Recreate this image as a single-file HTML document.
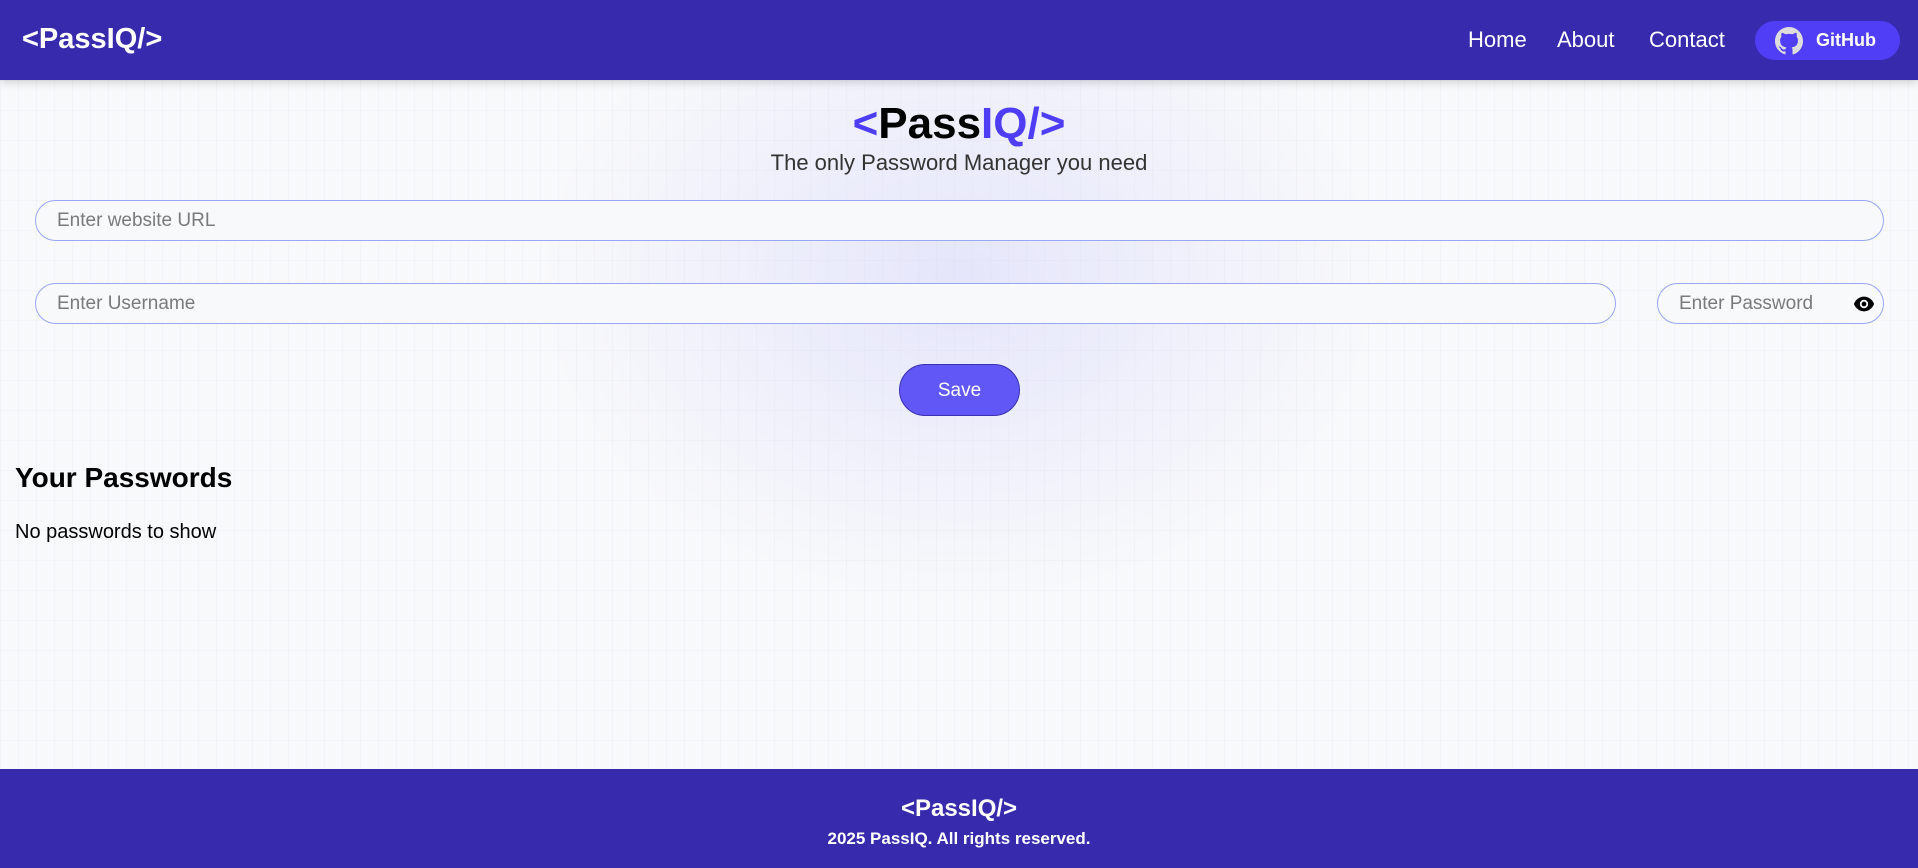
<!DOCTYPE html>
<html><head><meta charset="utf-8"><style>
*{box-sizing:border-box;margin:0;padding:0}
body{width:1918px;height:868px;overflow:hidden;font-family:"Liberation Sans",sans-serif;background:#f8f9fb;position:relative}
.bg{position:absolute;left:0;top:80px;width:1918px;height:689px;
background:radial-gradient(ellipse 420px 320px at 959px 200px,rgba(200,200,250,0.4),rgba(248,249,251,0) 100%),
linear-gradient(to right,rgba(200,205,220,0.12) 1px,transparent 1px),
linear-gradient(to bottom,rgba(200,205,220,0.12) 1px,transparent 1px);
background-size:auto,18px 18px,18px 30px}
header{position:absolute;left:0;top:0;width:1918px;height:80px;background:#372aad;box-shadow:0 3px 8px rgba(0,0,0,0.15);z-index:2}
.logo{position:absolute;left:22px;top:23px;color:#fff;font-weight:bold;font-size:29px}
.nav{position:absolute;top:27px;color:#fff;font-size:22px}
.gh{position:absolute;left:1755px;top:21px;width:145px;height:39px;border-radius:20px;background:#4f3ef5;color:#fff;font-weight:bold;font-size:18px}
.gh svg{position:absolute;left:20px;top:6px}
.gh span{position:absolute;left:61px;top:9px}
h1{position:absolute;left:0;width:1918px;top:99px;text-align:center;font-size:44px;font-weight:bold;color:#000}
.p{color:#4f3df5}
.sub{position:absolute;left:0;width:1918px;top:150px;text-align:center;font-size:22px;color:#333}
.inp{position:absolute;border:1px solid #99a6f5;border-radius:22px;background:#f8f9fb;color:#7a7a7a;font-size:19px;padding-left:21px;line-height:39px}
.save{position:absolute;left:899px;top:364px;width:121px;height:52px;border-radius:26px;background:#6157f6;border:1px solid #3a2fb0;color:#fff;font-size:19px;text-align:center;line-height:52px}
h2{position:absolute;left:15px;top:462px;font-size:28px;font-weight:bold;color:#000}
.none{position:absolute;left:15px;top:521px;font-size:20px;color:#000}
footer{position:absolute;left:0;top:769px;width:1918px;height:99px;background:#372aad;color:#fff;text-align:center}
.fl{position:absolute;width:100%;top:26px;font-size:24px;font-weight:bold}
.fc{position:absolute;width:100%;top:60px;font-size:17px;font-weight:bold}
</style></head><body>
<div class="bg"></div>
<header>
<div class="logo">&lt;PassIQ/&gt;</div>
<div class="nav" style="left:1468px">Home</div>
<div class="nav" style="left:1557px">About</div>
<div class="nav" style="left:1649px">Contact</div>
<div class="gh"><svg width="28" height="28" viewBox="0 0 16 16"><path fill="#ddd" d="M8 0C3.58 0 0 3.580 0 8c0 3.54 2.29 6.53 5.470 7.590.4.07.55-.17.55-.38v-1.33c-2.23.48-2.7-1.07-2.7-1.07-.36-.92-.89-1.17-.89-1.17-.73-.5.06-.49.06-.49.8.06 1.23.83 1.23.83.72 1.22 1.87.87 2.33.66.07-.52.28-.87.51-1.07-1.78-.2-3.64-.89-3.64-3.95 0-.87.31-1.59.82-2.15-.08-.2-.36-1.02.08-2.12 0 0 .67-.21 2.2.82a7.6 7.6 0 0 1 4 0c1.53-1.04 2.2-.82 2.2-.82.44 1.1.16 1.92.08 2.12.51.56.82 1.27.82 2.15 0 3.07-1.87 3.750-3.65 3.95.29.25.54.73.54 1.48v2.2c0 .21.15.46.55.38A8.01 8.01 0 0 0 16 8c0-4.42-3.58-8-8-8z"/></svg><span>GitHub</span></div>
</header>
<h1><span class="p">&lt;</span>Pass<span class="p">IQ/&gt;</span></h1>
<div class="sub">The only Password Manager you need</div>
<div class="inp" style="left:35px;top:200px;width:1849px;height:41px">Enter website URL</div>
<div class="inp" style="left:35px;top:283px;width:1581px;height:41px">Enter Username</div>
<div class="inp" style="left:1657px;top:283px;width:227px;height:41px">Enter Password
<svg style="position:absolute;right:8px;top:11px" width="22" height="18" viewBox="0 0 24 18"><path d="M12 1C6.5 1 2.5 5 1 9c1.5 4 5.5 8 11 8s9.5-4 11-8c-1.5-4-5.5-8-11-8z" fill="#000"/><circle cx="12" cy="9" r="4.6" fill="#f8f9fb"/><circle cx="12" cy="9" r="2.6" fill="#000"/></svg></div>
<div class="save">Save</div>
<h2>Your Passwords</h2>
<div class="none">No passwords to show</div>
<footer><div class="fl">&lt;PassIQ/&gt;</div><div class="fc">2025 PassIQ. All rights reserved.</div></footer>
</body></html>
